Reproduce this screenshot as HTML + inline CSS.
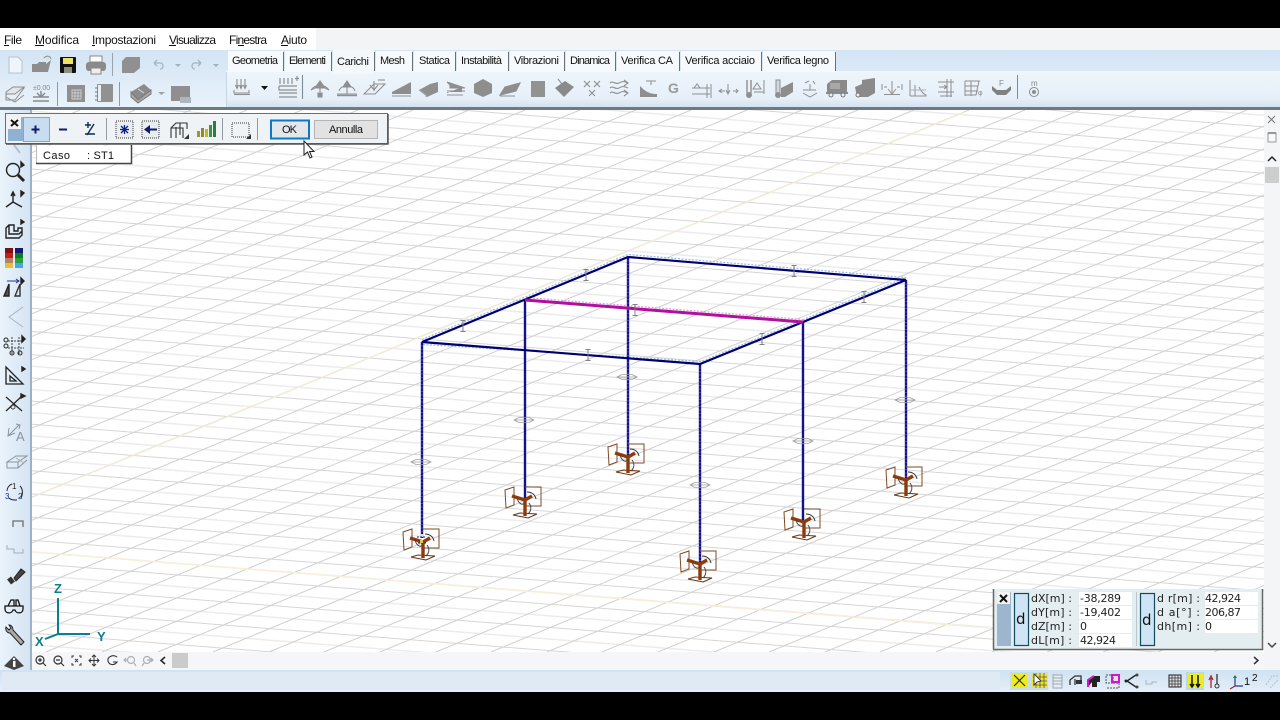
<!DOCTYPE html>
<html lang="it"><head><meta charset="utf-8"><title>Carichi</title>
<style>html,body{margin:0;padding:0;background:#000;width:1280px;height:720px;overflow:hidden}svg{display:block}text{font-family:"Liberation Sans",sans-serif;font-size:12px;fill:#111}.m{font-family:"DejaVu Sans",sans-serif;font-size:11px;fill:#222}</style></head><body>
<svg width="1280" height="720" viewBox="0 0 1280 720" xmlns="http://www.w3.org/2000/svg">
<defs>
<linearGradient id="tb" x1="0" y1="0" x2="0" y2="1"><stop offset="0" stop-color="#d3e4f4"/><stop offset="1" stop-color="#e9f2fa"/></linearGradient>
<linearGradient id="rb" x1="0" y1="0" x2="0" y2="1"><stop offset="0" stop-color="#eef5fb"/><stop offset=".75" stop-color="#e6f0f9"/><stop offset="1" stop-color="#d4e2ef"/></linearGradient>
<linearGradient id="lb" x1="0" y1="0" x2="1" y2="0"><stop offset="0" stop-color="#eaf3fb"/><stop offset="1" stop-color="#d5e4f3"/></linearGradient>
<linearGradient id="st" x1="0" y1="0" x2="0" y2="1"><stop offset="0" stop-color="#cfe2f3"/><stop offset="1" stop-color="#e4eff8"/></linearGradient>
<g id="sup" fill="none" stroke="#7d4a26"><path d="M-20-6-11-9V9L-19 12Z" fill="#fff" fill-opacity=".35"/><path d="M0-9H16V10H0"/><path d="M-12 19-5 17 12 18 3 22Z" stroke="#6d3512"/><path d="M2-4C6-4 10-2 11 3" stroke="#333"/><path d="M-13 0 0 4" stroke="#8f3a0b" stroke-width="3.400"/><path d="M0 4 7 0" stroke="#8f3a0b" stroke-width="3.400"/><path d="M0 2V20" stroke="#8f3a0b" stroke-width="3.400"/><path d="M-8 2C-6 9 -2 9 0 7M4 7C7 11 6 15 3 18" stroke="#444"/></g>
<g id="ib" fill="none" stroke="#808080" stroke-width="1"><path d="M-2.500-5.500H2.500M0-5.500V5.500M-2.500 5.500H2.500"/></g>
<path id="el" d="M-10 0-5-2.500H5L10 0 5 2.500H-5Z M-10 0H10" fill="none" stroke="#a0a0a0" stroke-width=".8"/>
</defs>
<rect width="1280" height="720" fill="#000"/>
<rect y="28" width="1280" height="22" fill="#f3f4f5"/><rect y="28" width="316" height="22" fill="#fff"/>
<text x="4" y="44" textLength="18">File</text>
<text x="35" y="44" textLength="44">Modifica</text><text x="92" y="44" textLength="64">Impostazioni</text><text x="169" y="44" textLength="47">Visualizza</text><text x="229" y="44" textLength="38">Finestra</text><text x="281" y="44" textLength="26">Aiuto</text>
<path d="M4 45.500h5M35 45.500h9M92 45.500h3M169 45.500h7M238 45.500h6M281 45.500h7" stroke="#111"/>
<rect y="50" width="1280" height="58" fill="url(#tb)"/>
<rect x="226" y="71" width="1054" height="36" fill="url(#rb)"/><path d="M226.500 107V72" stroke="#c5d5e3"/>
<rect y="50" width="226" height="57" fill="url(#tb)"/>
<rect y="107" width="1280" height="3" fill="#6d7a84"/>
<g fill="#f7fafc"><rect x="228" y="51" width="55" height="21"/><rect x="285" y="51" width="46" height="21"/><rect x="333" y="50" width="41" height="24" fill="#f4f8fb"/><rect x="376" y="51" width="36" height="21"/><rect x="414" y="51" width="41" height="21"/><rect x="457" y="51" width="51" height="21"/><rect x="510" y="51" width="54" height="21"/><rect x="566" y="51" width="49" height="21"/><rect x="617" y="51" width="62" height="21"/><rect x="681" y="51" width="80" height="21"/><rect x="763" y="51" width="72" height="21"/></g>
<g stroke="#68707a"><path d="M283.500 52V71M331.500 52V71M374.500 52V71M412.500 52V71M455.500 52V71M508.500 52V71M564.500 52V71M615.500 52V71M679.500 52V71M761.500 52V71M835.500 52V71"/></g>
<g><text x="232" y="64" textLength="46" style="font-size:11px">Geometria</text><text x="289" y="64" textLength="37" style="font-size:11px">Elementi</text><text x="337" y="65" textLength="32" style="font-size:11px">Carichi</text><text x="380" y="64" textLength="25" style="font-size:11px">Mesh</text><text x="419" y="64" textLength="31" style="font-size:11px">Statica</text><text x="461" y="64" textLength="41" style="font-size:11px">Instabilità</text><text x="514" y="64" textLength="45" style="font-size:11px">Vibrazioni</text><text x="570" y="64" textLength="40" style="font-size:11px">Dinamica</text><text x="621" y="64" textLength="52" style="font-size:11px">Verifica CA</text><text x="685" y="64" textLength="70" style="font-size:11px">Verifica acciaio</text><text x="767" y="64" textLength="62" style="font-size:11px">Verifica legno</text></g>
<!-- left quick toolbar -->
<g fill="none" stroke="#b5c2cc"><path d="M9 57H18L22 61V73H9Z" fill="#eff5fa"/></g>
<path d="M32 72V64H37L39 62H46V64L51 60 48 72Z" fill="#8d8d8d"/><path d="M44 58C47 55 50 56 51 59" stroke="#8d8d8d" fill="none"/>
<rect x="60" y="57" width="16" height="16" rx="1" fill="#111"/><rect x="63" y="58" width="10" height="6" fill="#efe36a"/><rect x="64" y="67" width="8" height="6" fill="#8c8f80"/>
<path d="M90 56H102V62H90Z" fill="#fff" stroke="#888"/><rect x="86" y="62" width="20" height="9" rx="3" fill="#8a8a8a"/><rect x="91" y="68" width="10" height="6" fill="#eee" stroke="#888"/>
<path d="M112.500 53V76" stroke="#97a4ae"/>
<path d="M126 57H140V68L134 73H122V61Z" fill="#909090"/>
<g fill="none" stroke="#a9b3bb" stroke-width="1.300"><path d="M154 63H160C164 63 164 69 160 69M154 63 157 60M154 63 157 66M201 63H195C191 63 191 69 195 69M201 63 198 60M201 63 198 66"/></g>
<path d="M175 64h6l-3 3zM213 64h6l-3 3z" fill="#a7b0b8"/>
<path d="M6 95 17 88H24L15 100H6ZM6 97 15 102 24 95" fill="none" stroke="#8e8e8e"/><path d="M6 92 13 87H24L15 94H6Z" fill="#dfe6ec" stroke="#8e8e8e"/>
<text x="33" y="90" style="font-size:7px;fill:#888" textLength="17">±0.00</text><path d="M33 97H49M37 93 41 97 45 93M41 91V97M33 101H49" fill="none" stroke="#8a8a8a" stroke-width="1.500"/>
<path d="M57.500 82V106" stroke="#8d99a3"/>
<rect x="67" y="85" width="18" height="17" fill="#909090"/><path d="M72 90h9v9h-9zM72 93h9M72 96h9M75 90v9M78 90v9" stroke="#ddd" fill="none" stroke-width=".7"/>
<rect x="97" y="84" width="16" height="18" rx="1" fill="#919191"/><path d="M95 88h4M95 92h4M95 96h4M95 100h4" stroke="#777"/><rect x="98" y="85" width="3" height="16" fill="#e7eef4"/>
<path d="M119.500 82V106" stroke="#8d99a3"/>
<path d="M131 92 144 84 151 90 138 100Z" fill="#8b8b8b"/><path d="M131 92V97L138 103 151 94V90L138 100Z" fill="#aaa" stroke="#777"/><path d="M138 89l6 4" stroke="#ddd"/>
<path d="M158 92h7l-3.500 3z" fill="#9ba6af"/>
<rect x="171" y="86" width="19" height="15" fill="#8f8f8f"/><rect x="180" y="97" width="11" height="6" fill="#adb5bd"/>
<!-- ribbon icons -->
<g fill="none" stroke="#8f8f8f" stroke-width="1.100">
<path d="M237 79V88M241 79V88M245 79V88M235.500 85 237 88.500 238.500 85M239.500 85 241 88.500 242.500 85M243.500 85 245 88.500 246.500 85M234 90V93H249V90"/><path d="M234 94.500H250"/>
<path d="M280 78V84M284 78V84M288 78V84M292 78V84M297 76V81M295 78.500H299M279 86H297M279 86V90H297M279 93H297M279 97H297" stroke-width="1.200"/>
<path d="M302.500 75V99" stroke="#7e8a94"/>
<path d="M320 82V92M311 90C315 84 325 84 329 90"/><path d="M315 88 320 81 325 88ZM311 90 315 88M329 90 325 88" fill="#8f8f8f"/><rect x="318" y="93" width="4" height="4" fill="#8f8f8f"/>
<path d="M347 81V94M339 91C341 84 353 84 355 91M337 94H357"/><path d="M343 87 347 81 351 87Z" fill="#8f8f8f"/><path d="M337 95.500H357" stroke-width="1.600"/>
<path d="M364 94 374 84H385L375 94ZM374 81V91M370 85 374 90 378 85"/><path d="M378 80H385"/>
<path d="M392 92 411 82V94H392Z" fill="#8d8d8d" stroke="none"/><path d="M392 96H411"/>
<path d="M419 90 430 84 438 82V92L427 97Z" fill="#8f8f8f" stroke="none"/><path d="M419 90 426 95V97" stroke="#aaa"/>
<path d="M447 82 465 88H450V85ZM447 91H465M447 95H463" fill="#8e8e8e"/><path d="M447 93 462 87V92H447Z" fill="#8e8e8e" stroke="none"/>
<path d="M483 79 492 84V93L483 97 474 93V84Z" fill="#8e8e8e" stroke="none"/>
<path d="M500 95 505 87 520 83 516 91Z M500 96H515" fill="#8e8e8e"/>
<rect x="531" y="81" width="14" height="16" fill="#929292" stroke="none"/>
<path d="M555 88 565 81 574 87 564 97Z" fill="#8a8a8a" stroke="none"/><path d="M558 79 562 84"/>
<path d="M584 81 590 87M590 81 584 87M594 81 600 87M600 81 594 87M589 90 595 96M595 90 589 96"/>
<path d="M610 83C613 80 615 85 619 83S623 81 628 83M610 88C613 85 615 90 619 88S623 86 628 88M610 93C613 90 615 95 619 93S623 91 628 93"/><path d="M624 80 628 83 624 86M624 90 628 93 624 96"/>
<path d="M640 96V86C644 90 648 94 657 94V97H640Z" fill="#8f8f8f" stroke="none"/><path d="M646 81H656M651 81V85"/>
</g>
<text x="668" y="93" style="font-size:14px;font-weight:bold;fill:#9a9a9a">G</text>
<g fill="none" stroke="#8f8f8f" stroke-width="1"><path d="M692 88H710M692 94H710M707 84V98M711 84V98M694 88 697 84 700 88Z"/>
<path d="M719 91H725M733 91H738M722 89 719 91 722 93M736 89 738 91 736 93M728 84V93M726 90 728 94 730 90"/>
<path d="M747 80V93M751 80V93" stroke-width="1.400"/><circle cx="749" cy="95" r="2.500" fill="#8f8f8f"/><path d="M753 89 757 83 761 89ZM754 92H764M764 80V94"/></g>
<path d="M776 80h4v13h-4z" fill="#cfd8df" stroke="#8f8f8f"/><circle cx="778" cy="95" r="3" fill="#8f8f8f"/><path d="M781 88 793 82V92L785 97H781Z" fill="#8d8d8d"/>
<g fill="none" stroke="#8f8f8f"><path d="M803 90H816M803 93 810 97 817 93M810 90V84M813 81 815 84M805 83 809 81"/></g>
<path d="M827 84 832 80H847V94H827Z" fill="#8a8a8a"/><rect x="830" y="83" width="10" height="6" fill="#a8a8a8"/><path d="M826 93H848" stroke="#8a8a8a" stroke-width="2"/><circle cx="831" cy="95" r="2" fill="#eee" stroke="#777"/><circle cx="843" cy="95" r="2" fill="#eee" stroke="#777"/>
<path d="M855 87 862 84V80L875 78V93L868 97H857Z" fill="#8a8a8a"/><circle cx="858" cy="95" r="2" fill="#eee" stroke="#777"/>
<g fill="none" stroke="#8f8f8f"><path d="M892 81V93M888 89 892 94 896 89M884 94.500H900M882 84V90M902 84V90M884 87H887M897 87H900"/>
<path d="M910 80V96M915 85V96M919 87C921 91 923 94 926 95V96H910"/><path d="M910 90H926" stroke="#b0b0b0"/>
<path d="M938 82H954M938 92H954M947 79V97M951 79V97M939 87H947M944 85 947 87 944 89M940 96H952"/>
<path d="M965 81H980M965 81V96M971 81V96M965 86H978M965 91H978M979 81 976 95H965"/></g>
<text x="978" y="95" style="font-size:7px;fill:#888">φ</text>
<path d="M992 86 997 90H1006L1011 86V90L1006 95H997L992 90Z" fill="#818181"/><text x="999" y="86" style="font-size:8px;fill:#888">F</text>
<path d="M1017.500 75V99" stroke="#7e8a94"/>
<text x="1031" y="86" style="font-size:8px;fill:#888">m</text><circle cx="1034" cy="92" r="4.500" fill="none" stroke="#8c8c8c"/><circle cx="1034" cy="92" r="2" fill="#8c8c8c"/>
<path d="M261 86h7l-3.500 4z" fill="#111"/>
<!-- canvas -->
<rect x="32" y="110" width="1232" height="542" fill="#fff"/>
<svg x="32" y="110" width="1232" height="542" viewBox="32 110 1232 542">
<path fill="none" stroke="#ececec" stroke-width="1.500" d="M32 18.300l1232 97M32 41.500l1232 97M32 64.700l1232 97M32 87.900l1232 97M32 111.100l1232 97M32 134.300l1232 97M32 157.500l1232 97M32 180.700l1232 97M32 203.900l1232 97M32 227.100l1232 97M32 250.300l1232 97M32 273.500l1232 97M32 296.700l1232 97M32 319.900l1232 97M32 343.100l1232 97M32 366.300l1232 97M32 389.500l1232 97M32 412.700l1232 97M32 435.900l1232 97M32 459.100l1232 97M32 482.300l1232 97M32 505.500l1232 97M32 528.700l1232 97M32 551.900l1232 97M32 575.100l1232 97M32 598.300l1232 97M32 621.500l1232 97M32 644.700l1232 97"/>
<path fill="none" stroke="#d6d6d6" stroke-width="1" d="M32 29.900l1232 97M32 53.100l1232 97M32 76.300l1232 97M32 99.500l1232 97M32 122.700l1232 97M32 145.900l1232 97M32 169.100l1232 97M32 192.300l1232 97M32 215.500l1232 97M32 238.700l1232 97M32 261.900l1232 97M32 285.100l1232 97M32 308.300l1232 97M32 331.500l1232 97M32 354.700l1232 97M32 377.900l1232 97M32 401.100l1232 97M32 424.300l1232 97M32 447.500l1232 97M32 470.700l1232 97M32 493.900l1232 97M32 517.100l1232 97M32 540.300l1232 97M32 563.500l1232 97M32 586.700l1232 97M32 609.900l1232 97M32 633.100l1232 97"/>
<path fill="none" stroke="#d0d0d0" stroke-width="1" d="M-1232 652l1312-542M-1177 652l1312-542M-1121 652l1312-542M-1065 652l1312-542M-1010 652l1312-542M-954 652l1312-542M-899 652l1312-542M-843 652l1312-542M-787 652l1312-542M-732 652l1312-542M-676 652l1312-542M-621 652l1312-542M-565 652l1312-542M-510 652l1312-542M-454 652l1312-542M-398 652l1312-542M-343 652l1312-542M-287 652l1312-542M-232 652l1312-542M-176 652l1312-542M-120 652l1312-542M-65 652l1312-542M-9 652l1312-542M46 652l1312-542M102 652l1312-542M158 652l1312-542M213 652l1312-542M269 652l1312-542M324 652l1312-542M380 652l1312-542M436 652l1312-542M491 652l1312-542M547 652l1312-542M602 652l1312-542M658 652l1312-542M714 652l1312-542M769 652l1312-542M825 652l1312-542M880 652l1312-542M936 652l1312-542M992 652l1312-542M1047 652l1312-542M1103 652l1312-542M1158 652l1312-542M1214 652l1312-542"/>
<path d="M33 497 L965 112" stroke="#f4ecd6" stroke-width="1.200" fill="none"/>
<path d="M33 552 L990 628" stroke="#f8efd9" stroke-width="1.500" fill="none"/>
</svg>
<!-- frame -->
<g fill="none">
<g stroke="#9dbbe8" stroke-width="1.300" stroke-dasharray="2 1.500"><path d="M422 339.500 628 254.500 906 277.500M423 344.500 701 361.500 906 277.500"/><path d="M526 297.500 803 319.500" stroke="#e0a0dc"/></g>
<g stroke="#12128a" stroke-width="2.400"><path d="M422 342V538M525 300V498M628 257V456M906 280V479M803 322V521M700 364V563"/></g>
<g stroke="#6d6de0" stroke-width="1" stroke-dasharray="1 2.500"><path d="M422 342V538M628 257V456M906 280V479M700 364V563"/></g>
<g stroke="#00006e" stroke-width="2.200"><path d="M422 342 628 257 906 280 700 364Z"/></g>
<path d="M525 300 803 322" stroke="#b0109e" stroke-width="3"/>
</g>
<g><use href="#ib" x="586" y="275"/><use href="#ib" x="794" y="271"/><use href="#ib" x="864" y="297"/><use href="#ib" x="463" y="326"/><use href="#ib" x="635" y="310"/><use href="#ib" x="762" y="339"/><use href="#ib" x="588" y="355"/>
<use href="#el" x="421" y="462"/><use href="#el" x="524" y="420"/><use href="#el" x="627" y="377"/><use href="#el" x="905" y="400"/><use href="#el" x="803" y="441"/><use href="#el" x="700" y="485"/></g>
<use href="#sup" x="423" y="538"/><use href="#sup" x="525" y="496"/><use href="#sup" x="628" y="453"/><use href="#sup" x="906" y="476"/><use href="#sup" x="804" y="518"/><use href="#sup" x="700" y="560"/>
<rect x="420" y="534" width="4" height="3" fill="#ddd"/><path d="M417 537h9M418 543h9" stroke="#1a1aa0" stroke-dasharray="2 1"/><rect x="420" y="540" width="3" height="3" fill="#e2c64e"/>
<!-- axes -->
<g fill="none" stroke="#0b7f8f" stroke-width="2"><path d="M58 598V634H90M58 634 45 639"/></g>
<text x="54" y="593" style="font-size:13px;font-weight:bold;fill:#0b7f8f">Z</text><text x="97" y="641" style="font-size:13px;font-weight:bold;fill:#0b7f8f">Y</text><text x="35" y="646" style="font-size:13px;font-weight:bold;fill:#0b7f8f">X</text>
<!-- left toolbar -->
<rect x="0" y="110" width="30" height="560" fill="url(#lb)"/><rect x="30" y="110" width="2" height="560" fill="#9db1c6"/>
<path d="M14 145 20 153" stroke="#b7c1ca" stroke-width="2"/>
<g fill="none" stroke="#222" stroke-width="1.400">
<circle cx="13" cy="170" r="6.500"/><path d="M18 175 24 181" stroke-width="3"/><path d="M21 162 24 165 21 167Z" fill="#222"/>
<path d="M13 193V202M13 202 6 207M13 202 22 207M11 196 13 192 15 196"/><path d="M21 191 24 193 21 196Z" fill="#222"/>
<path d="M6 228 9 225H14V231H18V228H22V235L19 238H6ZM9 225V234H19M6 228V238M19 234 22 231"/><path d="M21 220 24 222 21 224Z" fill="#222"/>
<path d="M21 278 24 281 21 284Z" fill="#222"/><path d="M7 281H19M16 279 19 281 16 283" stroke="#2233aa" stroke-width="1"/>
<path d="M4 296 9 284V296Z" fill="#555"/><path d="M15 296 20 284V296Z" stroke="#333"/>
<path d="M23 307 9 317 23 327" stroke="#a9b3bb" stroke-width="1"/>
<path d="M8 341H24M8 348H24M12 337V354M19 337V354" stroke="#444" stroke-width="1" stroke-dasharray="2 1"/><circle cx="6" cy="340" r="2" stroke-width="1"/><circle cx="6" cy="346" r="2" stroke-width="1"/><circle cx="12" cy="353" r="2" stroke-width="1"/><circle cx="20" cy="353" r="2" stroke-width="1"/><path d="M22 336 25 339 22 342Z" fill="#222"/>
<path d="M6 367V384H23Z M10 376V381H16Z" stroke-width="1.300"/><path d="M22 367 25 369 22 371Z" fill="#222"/>
<path d="M6 397 22 411M22 396 6 411" stroke-width="1.200"/><circle cx="13" cy="407" r="2" stroke-width=".8"/><path d="M21 394 25 396 21 398Z" fill="#222"/>
</g>
<rect x="5" y="248" width="8" height="5" fill="#7e1111"/><rect x="15" y="248" width="8" height="5" fill="#13196e"/><rect x="5" y="253" width="8" height="5" fill="#c11d1d"/><rect x="15" y="253" width="8" height="5" fill="#0c7b24"/><rect x="5" y="258" width="8" height="5" fill="#ba8062"/><rect x="15" y="258" width="8" height="5" fill="#28a23a"/><rect x="5" y="263" width="8" height="5" fill="#dcc53a"/><rect x="15" y="263" width="8" height="5" fill="#4aa6e4"/>
<g fill="none" stroke="#8a949c"><path d="M8 436 19 425M9 428 8 436 15 433M16 424 20 425 19 429"/></g><text x="16" y="441" style="font-size:13px;fill:#8a949c">A</text>
<g fill="none" stroke="#8a949c"><path d="M7 462 16 456H27L18 462ZM7 462V468H18L27 460M18 462V468"/><path d="M16 458 24 463" stroke="#aaa"/>
<path d="M13 527V521H23V527" stroke="#6e6e6e" stroke-width="1.300"/><path d="M7 545V549H14V553H23V549" stroke="#a3adb5"/></g>
<g fill="none" stroke="#222"><path d="M12 484C9 485 7 488 7 491M20 486C23 489 23 494 21 498M9 498C11 500 13 500 17 500"/></g><text x="12" y="489" style="font-size:8px;fill:#222">1</text><text x="18" y="499" style="font-size:8px;fill:#1a2e8c">2</text><text x="5" y="499" style="font-size:8px;fill:#1a2e8c">3</text>
<path d="M14 578 21 569 25 572 16 581Z" fill="#444" stroke="#222"/><path d="M9 578 13 583" stroke="#333" stroke-width="5"/>
<g fill="none" stroke="#111" stroke-width="1.300"><path d="M8 606 11 600H14V606M20 606 18 600H16V606"/><path d="M5 606H23V609C23 614 16 614 15 610H13C12 614 5 614 5 609Z"/></g>
<path d="M6 627C5 630 7 633 10 633L21 645 24 642 13 630C13 628 12 625 9 625L11 628 9 630Z" fill="#aaa" stroke="#222"/>
<path d="M4 666 14 656 24 666 14 670Z" fill="#444"/><circle cx="14" cy="659" r="1.200" fill="#fff"/><rect x="13" y="661" width="2.500" height="6" fill="#fff"/>
<!-- bottom scroll -->
<rect x="32" y="652" width="1248" height="18" fill="#f5f6f7"/>
<g fill="none" stroke="#333" stroke-width="1.200"><circle cx="40" cy="660" r="4"/><path d="M43 663 46 666M38 660H42M40 658V662M56 660H60"/><circle cx="58" cy="660" r="4"/><path d="M61 663 64 666"/>
<path d="M72 658V656H74M79 656H81V658M81 663V665H79M74 665H72V663M75 659 78 662M78 659 75 662" stroke-width="1"/><path d="M94 655V666M89 660.500H99M92 657 94 655 96 657M92 664 94 666 96 664M91 658.500 89 660.500 91 662.500M97 658.500 99 660.500 97 662.500" stroke-width="1"/>
<path d="M117 657C113 654 107 657 108 661S114 666 117 662H113" stroke-width="1.100"/><g stroke="#aab1b7"><circle cx="131" cy="660" r="3.500"/><path d="M128 660H124M126 658 124 660 126 662M134 663 136 666"/><circle cx="147" cy="660" r="3.500"/><path d="M147 660H153M151 658 153 660 151 662M144 663 142 666"/></g></g>
<path d="M165 657 161 660.500 165 664" fill="none" stroke="#222" stroke-width="1.500"/>
<rect x="172" y="653" width="16" height="15" fill="#cbcbcb"/>
<path d="M1254 657 1258 660.500 1254 664" fill="none" stroke="#333" stroke-width="1.500"/>
<!-- right scroll -->
<rect x="1264" y="110" width="16" height="560" fill="#f4f5f6"/>
<path d="M1268 116 1275 123M1275 116 1268 123" stroke="#777" fill="none"/><rect x="1268" y="133" width="8" height="9" fill="#f8f8f8" stroke="#999"/><path d="M1268 133h8" stroke="#777" stroke-width="1.500"/>
<path d="M1268 161 1272 157 1276 161" fill="none" stroke="#222" stroke-width="1.500"/><rect x="1265" y="167" width="14" height="16" fill="#cdcdcd"/>
<path d="M1268 643 1272 647 1276 643" fill="none" stroke="#444" stroke-width="1.500"/>
<!-- status -->
<rect y="670" width="1280" height="22" fill="url(#st)"/><rect x="2" y="672" width="998" height="18" fill="#dfeaf4"/>
<rect x="1010" y="672" width="38" height="18" fill="#c7dced"/>
<rect x="1012" y="673" width="15" height="15" fill="#ecec23"/><path d="M1014 675 1025 686M1025 675 1014 686" stroke="#333" stroke-width="1.200"/>
<rect x="1032" y="673" width="15" height="15" fill="#e7e340"/><path d="M1033 677H1047M1033 681H1047M1033 685H1047M1036 673V688M1040 673V688M1044 673V688" stroke="#6b5d33" stroke-width=".8"/><path d="M1034 674V685L1037 682 1041 681Z" fill="#fff" stroke="#222" stroke-width=".8"/>
<path d="M1053 675H1062V688H1053ZM1053 678H1062M1053 681H1062M1053 684H1062" fill="#e3eef6" stroke="#9ca8b2"/>
<path d="M1070 685V680L1075 676H1081V681M1075 685V679" fill="none" stroke="#333" stroke-width="1.300"/><path d="M1076 680H1082V684H1076Z" fill="#333"/>
<path d="M1088 687V680L1094 676H1100V682H1097V687H1092V682Z" fill="#222"/><path d="M1088 687V680L1094 676" fill="none" stroke="#d116c9" stroke-width="2"/>
<path d="M1106 675H1113V683H1106ZM1113 683H1119V688H1106" fill="none" stroke="#555" stroke-dasharray="2 1"/><rect x="1112" y="675" width="7" height="7" fill="none" stroke="#d116c9" stroke-width="2"/>
<path d="M1136 675 1127 681 1136 687" fill="none" stroke="#222" stroke-width="1.400"/><circle cx="1126" cy="681" r="1.500" fill="#222"/><circle cx="1137" cy="675" r="1.500" fill="#444"/><circle cx="1137" cy="687" r="1.500" fill="#444"/>
<path d="M1146 680V684H1152V682H1157" fill="none" stroke="#a9b5be"/>
<rect x="1169" y="675" width="12" height="12" fill="#ddd" stroke="#222"/><path d="M1169 678H1181M1169 681H1181M1169 684H1181M1172 675V687M1175 675V687M1178 675V687" stroke="#333" stroke-width=".7"/>
<rect x="1186" y="672" width="18" height="18" fill="#bdd6ea"/><rect x="1188" y="673" width="15" height="15" fill="#ecec23"/><path d="M1192 675V686M1190 684 1192 687 1194 684M1198 675V686M1196 684 1198 687 1200 684" fill="none" stroke="#111" stroke-width="1.500"/>
<path d="M1211 678V688M1209 680 1211 676 1213 680" fill="none" stroke="#b02222" stroke-width="1.300"/><path d="M1217 674V684" stroke="#333" stroke-width="1.300"/><circle cx="1217" cy="686" r="2" fill="none" stroke="#333"/>
<path d="M1235 676V686H1243" fill="none" stroke="#1a3d9a" stroke-width="1.200"/><path d="M1235 686 1230 689" stroke="#b02222" stroke-width="1.200"/><path d="M1233 678 1235 675 1237 678Z" fill="#0b8a2a"/>
<text x="1244" y="685" style="font-size:11px">1</text><text x="1252" y="681" style="font-size:10px">2</text>
<path d="M1266 685 1272 676H1278M1270 688 1278 680" fill="none" stroke="#b5bfc7" stroke-dasharray="2 1"/>
<!-- measure panel -->
<rect x="993" y="589" width="269" height="60" fill="#e4eef1"/><path d="M993.500 649.500V589M993 649.500H1262.500V589" fill="none" stroke="#666" stroke-width="1.500"/>
<rect x="997" y="592" width="14" height="54" fill="#9eb5cf"/><rect x="997" y="592" width="13" height="12" fill="#f2f2f2"/><path d="M1000 595 1007 602M1007 595 1000 602" stroke="#111" stroke-width="2"/>
<rect x="1014.500" y="593.500" width="14" height="52" fill="#cfe4f5" stroke="#134a5c" stroke-width="1.200"/><text x="1016" y="624" style="font-family:'DejaVu Sans',sans-serif;font-size:15px">d</text>
<rect x="1140.500" y="593.500" width="14" height="52" fill="#cfe4f5" stroke="#134a5c" stroke-width="1.200"/><text x="1142" y="625" style="font-family:'DejaVu Sans',sans-serif;font-size:15px">d</text>
<path d="M1136.500 592V646" stroke="#b9c7cb"/>
<g fill="#fff"><rect x="1079" y="592" width="53" height="13"/><rect x="1079" y="606" width="53" height="13"/><rect x="1079" y="620" width="53" height="13"/><rect x="1079" y="634" width="53" height="13"/><rect x="1205" y="592" width="53" height="13"/><rect x="1205" y="606" width="53" height="13"/><rect x="1205" y="620" width="53" height="13"/></g>
<text class="m" x="1031" y="602" textLength="41">dX[m] :</text><text class="m" x="1031" y="616" textLength="41">dY[m] :</text><text class="m" x="1031" y="630" textLength="41">dZ[m] :</text><text class="m" x="1031" y="644" textLength="41">dL[m] :</text>
<text class="m" x="1080" y="602" textLength="41">-38,289</text><text class="m" x="1080" y="616" textLength="41">-19,402</text><text class="m" x="1080" y="630">0</text><text class="m" x="1080" y="644" textLength="36">42,924</text>
<text class="m" x="1157" y="602" textLength="43">d r[m] :</text><text class="m" x="1157" y="616" textLength="43">d a[°] :</text><text class="m" x="1157" y="630" textLength="43">dh[m] :</text>
<text class="m" x="1205" y="602" textLength="36">42,924</text><text class="m" x="1205" y="616" textLength="36">206,87</text><text class="m" x="1205" y="630">0</text>
<!-- floating toolbar -->
<rect x="5.500" y="113.500" width="382" height="30" fill="#f0f3f6" stroke="#6a6f74"/><path d="M388 114V144H6" stroke="#555" stroke-width="1.500" fill="none"/>
<rect x="8" y="117" width="15" height="24" fill="#8fb1d3"/><rect x="8" y="117" width="13" height="12" fill="#f3f3f3"/><path d="M11 120 18 126M18 120 11 126" stroke="#111" stroke-width="2"/>
<rect x="23.500" y="117.500" width="26" height="24" fill="#c9ddf1" stroke="#86a5c7"/>
<path d="M31.500 129.500h8M35.500 125.500v8M59 129.500h8" stroke="#0c1d6a" stroke-width="2"/><path d="M85 125h6M88 122v6M85 134h10M94 124 87 135" stroke="#0c2a55" stroke-width="1.400"/>
<path d="M106.500 118V140M222.500 118V140M257.500 118V140" stroke="#929ca5"/>
<rect x="116" y="121" width="17" height="17" fill="#e8edf2" stroke="#333" stroke-dasharray="1 1"/><path d="M121 126 128 133M128 126 121 133M120 129.500h9M124.500 125v9" stroke="#0c1d8a" stroke-width="1.300"/>
<rect x="142" y="121" width="17" height="17" fill="#e8edf2" stroke="#333" stroke-dasharray="1 1"/><path d="M145 129.500H157" stroke="#0c1d6a" stroke-width="2"/><path d="M150 125 144 129.500 150 134Z" fill="#0c1d6a"/>
<path d="M171 138V128L176 123H187V129M176 138V127M171 128H183V138M180 123V135" fill="none" stroke="#333" stroke-width="1.100"/><path d="M184 139 189 134V139Z" fill="#333"/>
<g><rect x="197" y="131" width="3" height="6" fill="#9a9a30"/><rect x="201" y="128" width="3" height="9" fill="#8d8b2f"/><rect x="205" y="129" width="3" height="8" fill="#c1ba20"/><rect x="209" y="125" width="3" height="12" fill="#3a9440"/><rect x="213" y="121" width="3" height="16" fill="#2c7e3c"/></g>
<rect x="232" y="123" width="17" height="14" fill="none" stroke="#333" stroke-dasharray="1 1"/><path d="M246 139 251 134V139Z" fill="#333"/>
<rect x="271" y="120.500" width="38" height="18" fill="#e4e7ea" stroke="#0a78c8" stroke-width="2"/><text x="282" y="133" textLength="15" style="font-size:11px">OK</text>
<rect x="314.500" y="120.500" width="63" height="18" fill="#e2e2e2" stroke="#b4b4b4"/><text x="329" y="133" textLength="34" style="font-size:11px">Annulla</text>
<!-- info box -->
<rect x="36.500" y="145.500" width="95" height="18" fill="#fff"/><path d="M36.500 145V164" stroke="#bbb"/><path d="M36 163.500H131.500V145" fill="none" stroke="#444" stroke-width="1.500"/>
<text x="43" y="159" textLength="27" style="font-size:11px">Caso</text><text x="87" y="159" textLength="27" style="font-size:11px">: ST1</text>
<!-- cursor -->
<path d="M304 141V155L307.500 152 310 158 312 157 309.500 151.500H314Z" fill="#fff" stroke="#222" stroke-width="1"/>
</svg>
</body></html>
